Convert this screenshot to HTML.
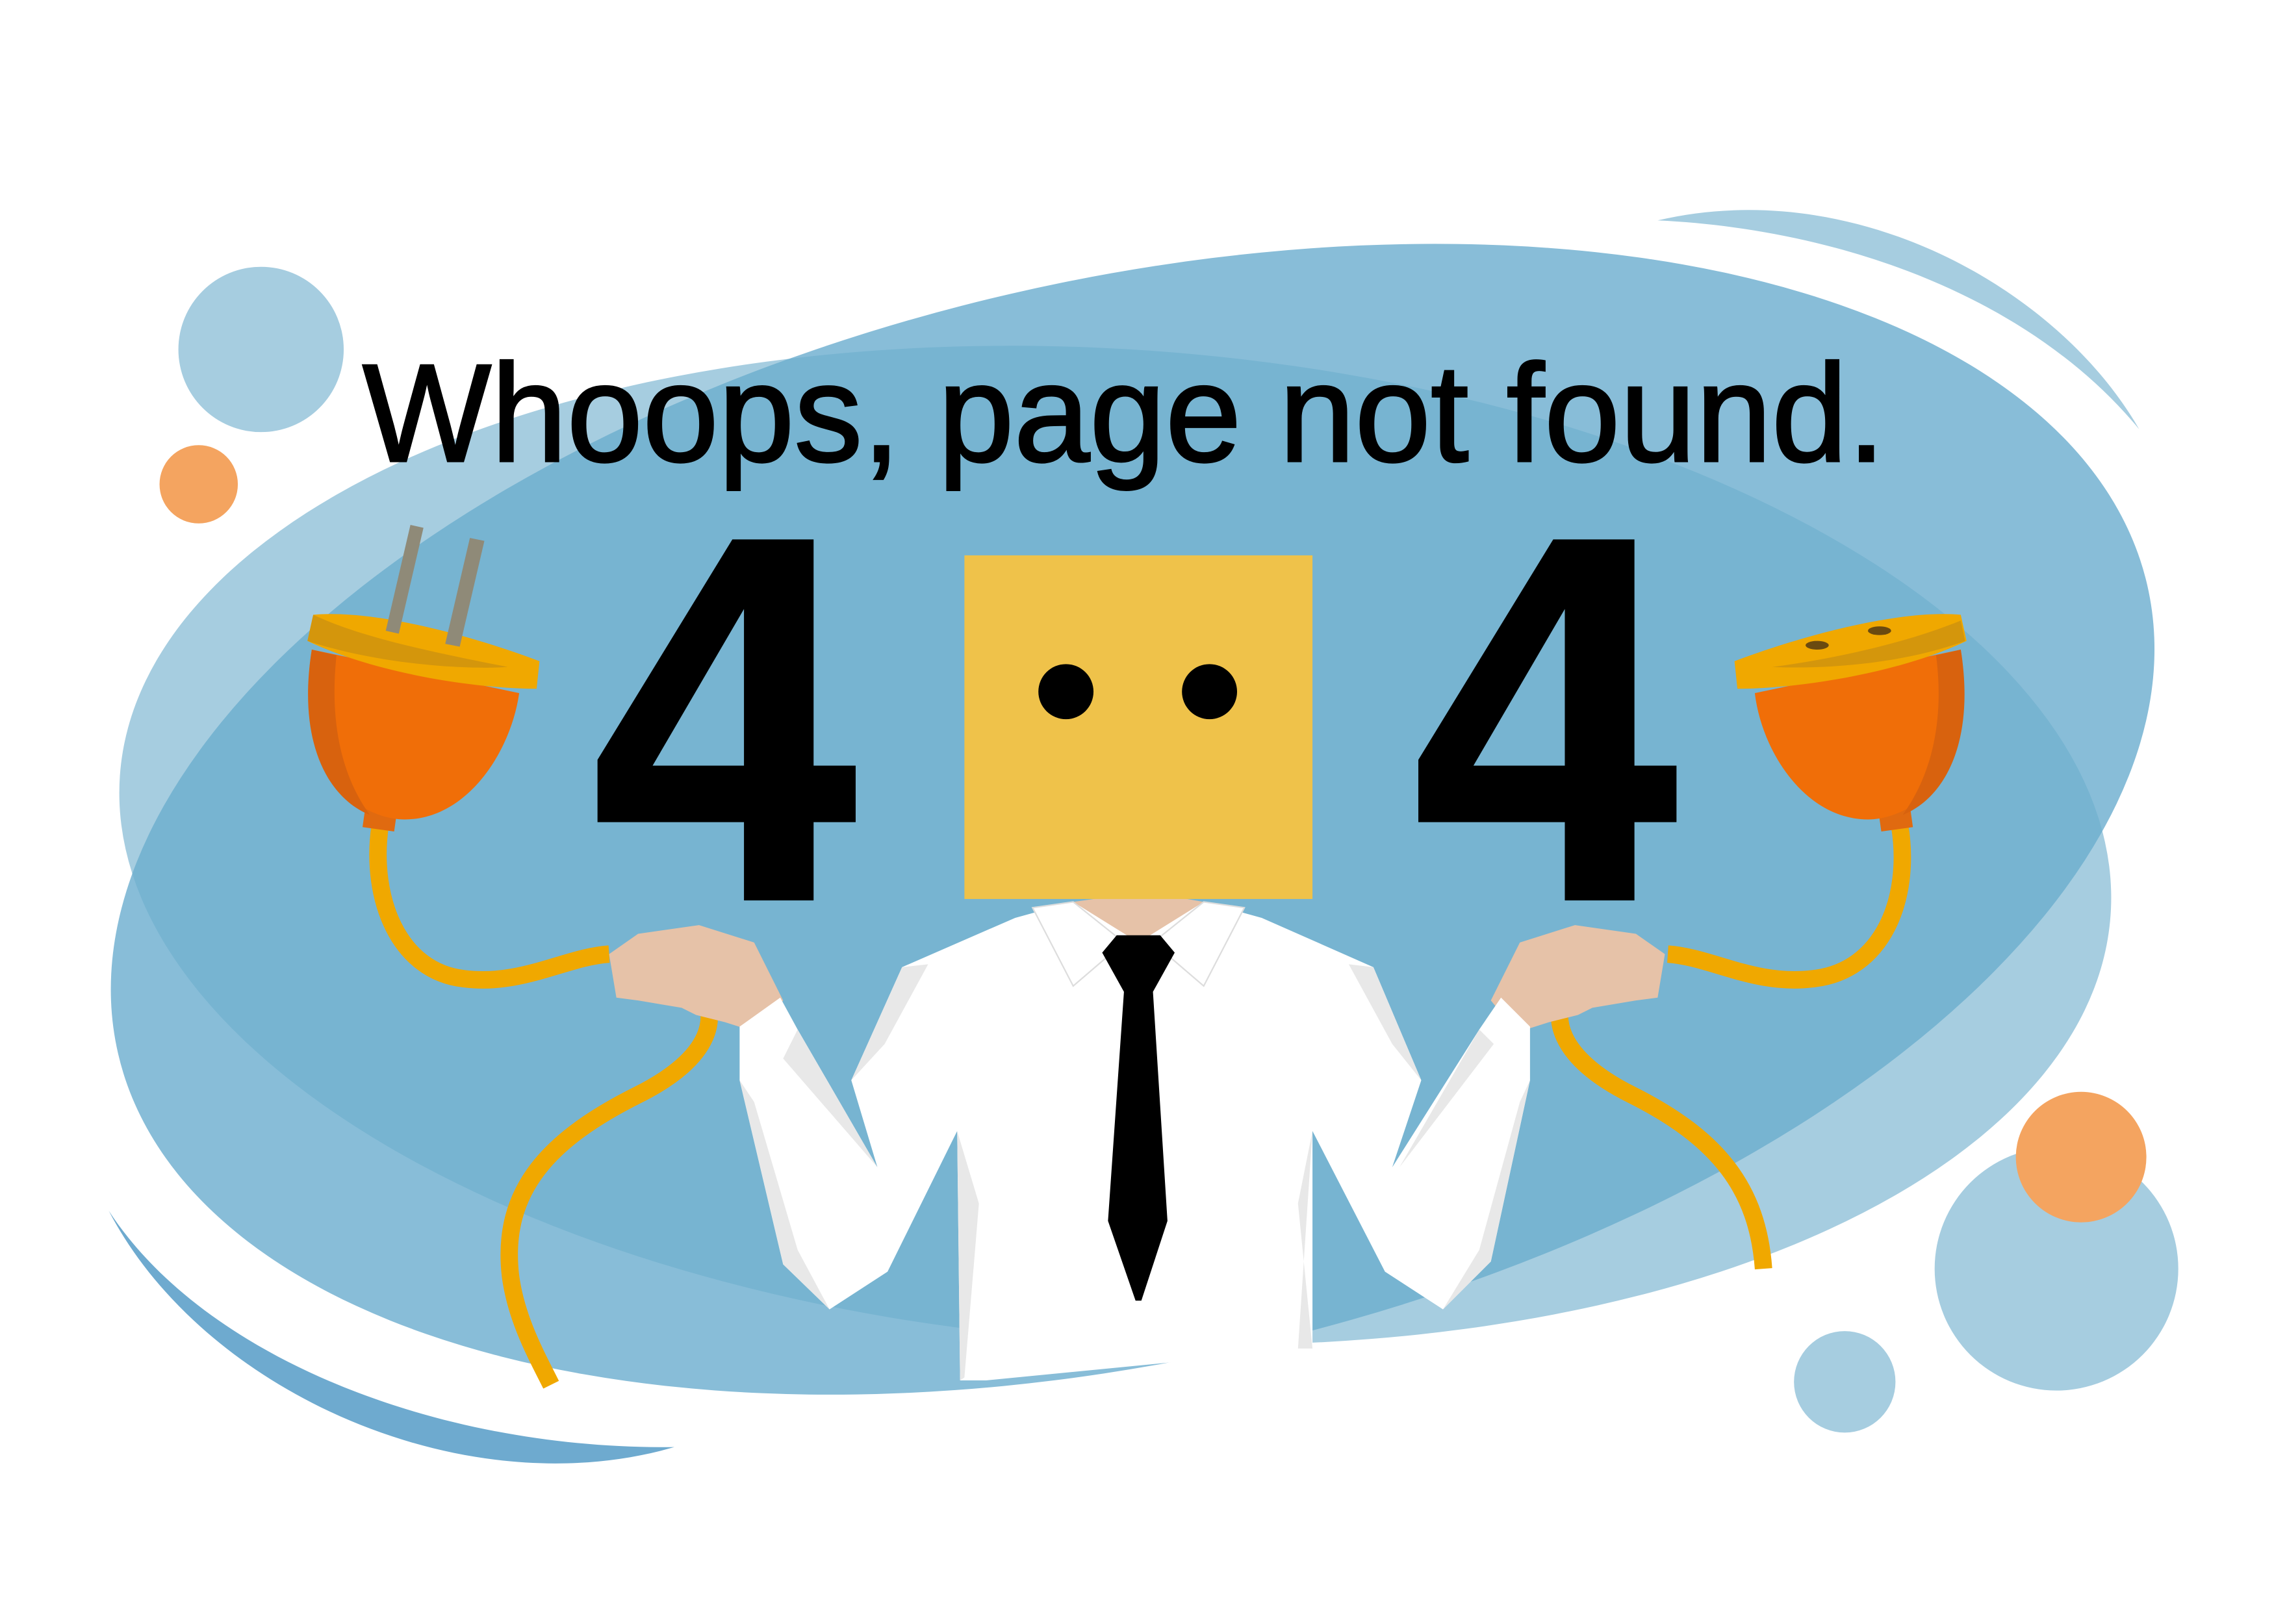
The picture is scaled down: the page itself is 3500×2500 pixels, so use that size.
<!DOCTYPE html>
<html><head><meta charset="utf-8"><style>html,body{margin:0;padding:0;background:#fff;overflow:hidden}svg{display:block}</style></head>
<body>
<svg width="3500" height="2500" viewBox="0 0 1568 1120" xmlns="http://www.w3.org/2000/svg">
<defs>
<clipPath id="c1"><ellipse cx="769" cy="583" rx="688" ry="342" transform="rotate(4 769 583)"/></clipPath>
</defs>
<rect width="1568" height="1120" fill="#fff"/>
<path d="M1143 152 C1280 120 1420 200 1475 296 C1400 205 1270 158 1143 152 Z" fill="#a6cde0"/>
<path d="M75 835 C140 935 300 1000 465 998 C320 1040 140 960 75 835 Z" fill="#6eaacf"/>
<ellipse cx="769" cy="583" rx="688" ry="342" transform="rotate(4 769 583)" fill="#a6cde0"/>
<ellipse cx="781" cy="565" rx="718" ry="372" transform="rotate(-13 781 565)" fill="#88bdd8"/>
<g clip-path="url(#c1)"><ellipse cx="781" cy="565" rx="718" ry="372" transform="rotate(-13 781 565)" fill="#77b4d1"/></g>
<circle cx="180" cy="241" r="57" fill="#a6cde0"/>
<circle cx="137" cy="334" r="27" fill="#f4a460"/>
<circle cx="1418" cy="875" r="84" fill="#a6cde0"/>
<circle cx="1435" cy="798" r="45" fill="#f4a460"/>
<circle cx="1272" cy="953" r="35" fill="#a6cde0"/>
<text x="250" y="318" font-family="Liberation Sans, sans-serif" font-size="96" textLength="1050" lengthAdjust="spacingAndGlyphs" fill="#000" stroke="#000" stroke-width="1.5">Whoops, page not found.</text>
<path d="M505 372 H561 V528 H590 V567 H561 V621 H513 V567 H412 V524 Z M513 420 L450 528 H513 Z" fill="#000" fill-rule="evenodd"/>
<path d="M1071 372 H1127 V528 H1156 V567 H1127 V621 H1079 V567 H978 V524 Z M1079 420 L1016 528 H1079 Z" fill="#000" fill-rule="evenodd"/>
<g fill="none" stroke="#f0a800" stroke-width="12" stroke-linecap="butt">
<path d="M262 570 C255 620 275 670 320 675 C360 680 390 660 420 658"/>
<path d="M478 676 C500 700 490 730 440 755 C380 785 345 820 352 880 C356 910 370 935 380 955"/>
<path d="M1310 570 C1318 620 1298 670 1250 675 C1210 680 1180 660 1150 658"/>
<path d="M1085 676 C1065 700 1075 730 1125 755 C1185 785 1212 820 1216 875"/>
</g>
<rect x="251" y="556" width="22" height="16" fill="#e06a10" transform="rotate(8 262 564)"/>
<path d="M215 448 C205 510 230 560 275 565 C320 568 352 520 358 478 Z" fill="#f06e08"/>
<path d="M215 448 C205 510 225 550 255 562 C232 530 228 490 232 452 Z" fill="#d8620e"/>
<path d="M216 424 L212 442 C260 465 330 475 370 475 L372 456 C330 440 260 420 216 424 Z" fill="#f0a800"/>
<path d="M216 424 L212 442 C260 458 320 462 350 460 C300 450 250 440 216 424 Z" fill="#d4960c"/>
<polygon points="283,362 292,364 275,437 266,435" fill="#8f8a78"/>
<polygon points="324,371 334,373 317,446 307,444" fill="#8f8a78"/>
<rect x="1296" y="556" width="22" height="16" fill="#e06a10" transform="rotate(-8 1307 564)"/>
<path d="M1352 448 C1362 510 1337 560 1292 565 C1247 568 1215 520 1210 478 Z" fill="#f06e08"/>
<path d="M1352 448 C1362 510 1342 550 1312 562 C1335 530 1340 490 1335 452 Z" fill="#d8620e"/>
<path d="M1352 424 L1356 442 C1308 465 1238 475 1198 475 L1196 456 C1238 440 1308 420 1352 424 Z" fill="#f0a800"/>
<path d="M1352 428 C1310 445 1260 455 1222 460 C1270 462 1320 455 1355 442 Z" fill="#d4960c"/>
<ellipse cx="1253" cy="445" rx="8" ry="3" fill="#6a4a10"/>
<ellipse cx="1296" cy="435" rx="8" ry="3" fill="#6a4a10"/>
<path d="M420 658 L440 644 L482 638 L520 650 L540 690 L522 712 L500 705 L480 700 L470 695 L440 690 L425 688 Z" fill="#e6c2a8"/>
<path d="M1148 658 L1128 644 L1086 638 L1048 650 L1028 690 L1046 712 L1068 705 L1088 700 L1098 695 L1128 690 L1143 688 Z" fill="#e6c2a8"/>
<path d="M622 667 L700 633 L740 622 L830 622 L870 633 L947 667 L980 745 L960 805 L1020 710 L1035 688 L1055 708 L1055 745 L1028 870 L995 903 L955 877 L905 780 L905 930 L680 952 L662 952 L660 780 L612 877 L572 903 L540 872 L510 745 L510 708 L538 688 L550 710 L605 805 L587 745 Z" fill="#fff"/>
<path d="M587 745 L622 667 L640 665 L610 720 Z M605 805 L550 710 L540 730 Z M510 745 L540 872 L572 903 L550 862 L520 760 Z M980 745 L947 667 L930 665 L960 720 Z M965 805 L1020 710 L1030 720 Z M1055 745 L1028 870 L995 903 L1020 862 L1048 760 Z M660 780 L675 830 L665 950 L662 952 Z M905 780 L895 830 L905 930 L895 930 Z" fill="#e8e8e8"/>
<path d="M740 622 L785 650 L830 622 L790 615 Z" fill="#e6c2a8"/>
<path d="M712 626 L740 622 L775 650 L740 680 Z M858 626 L830 622 L795 650 L830 680 Z" fill="#fff" stroke="#ddd" stroke-width="1"/>
<path d="M770 645 L800 645 L810 657 L795 684 L805 842 L787 897 L783 897 L764 842 L775 684 L760 657 Z" fill="#000"/>
<rect x="665" y="383" width="240" height="237" fill="#efc24a"/>
<circle cx="735" cy="477" r="19" fill="#000"/>
<circle cx="834" cy="477" r="19" fill="#000"/>
</svg>
</body></html>
